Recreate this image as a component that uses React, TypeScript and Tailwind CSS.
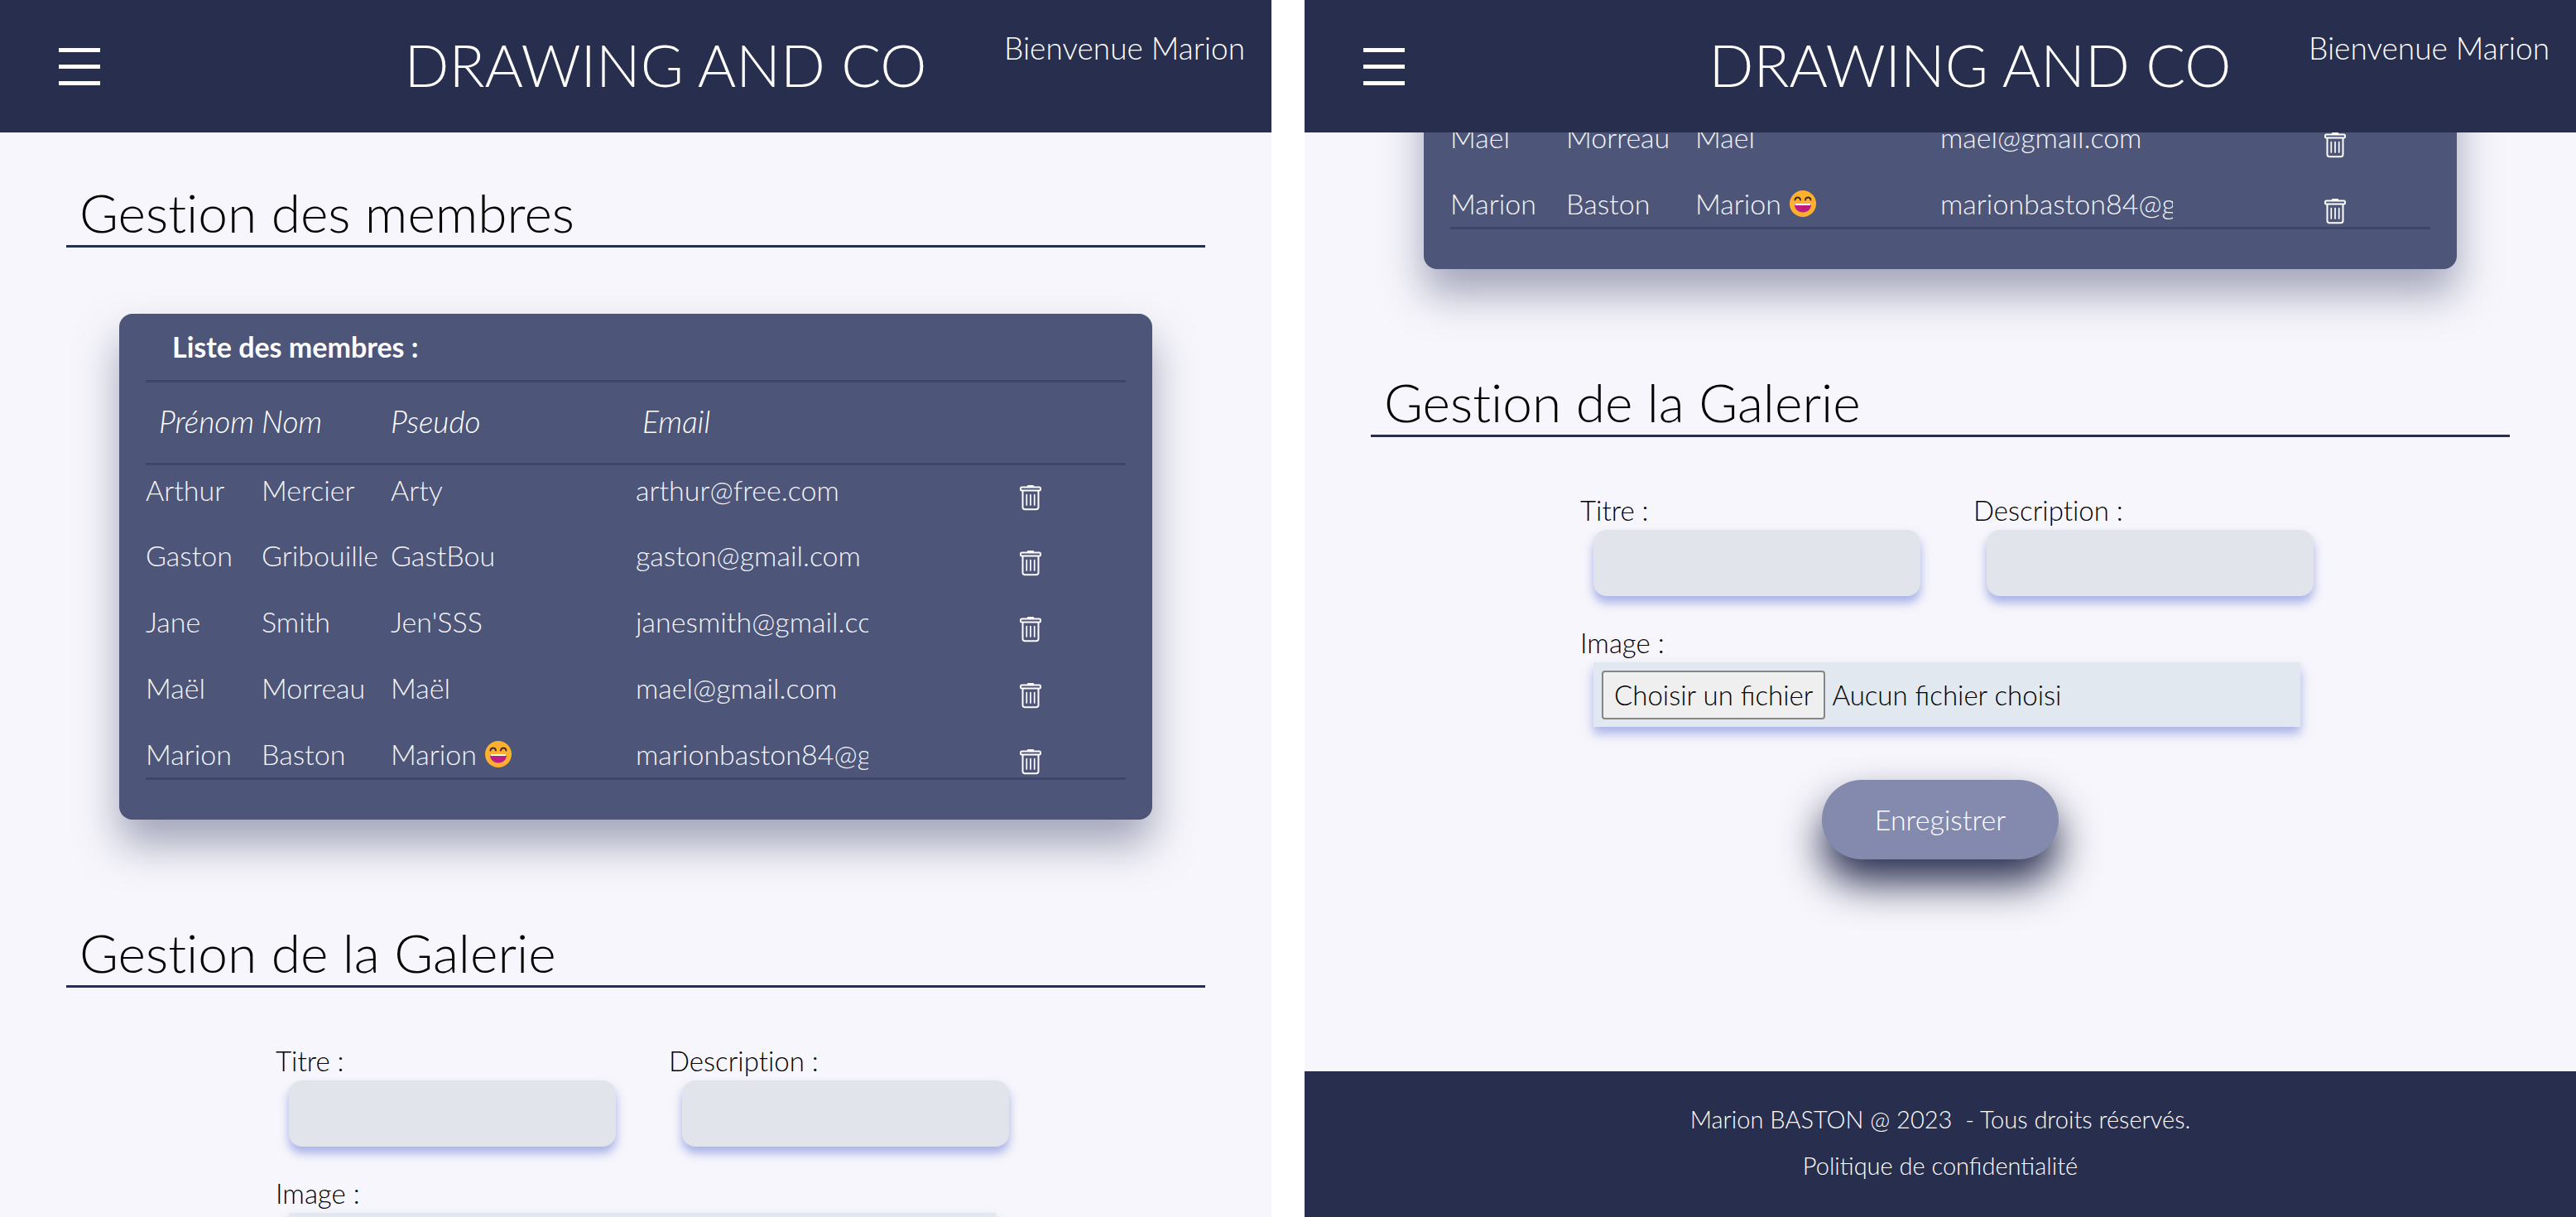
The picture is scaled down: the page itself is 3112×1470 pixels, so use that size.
import React, { useId } from "react";

type Member = {
  first: string;
  last: string;
  pseudo: string;
  email: string;
  emoji?: boolean;
};

const members: Member[] = [
  { first: "Arthur", last: "Mercier", pseudo: "Arty", email: "arthur@free.com" },
  { first: "Gaston", last: "Gribouille", pseudo: "GastBou", email: "gaston@gmail.com" },
  { first: "Jane", last: "Smith", pseudo: "Jen'SSS", email: "janesmith@gmail.com" },
  { first: "Maël", last: "Morreau", pseudo: "Maël", email: "mael@gmail.com" },
  { first: "Marion", last: "Baston", pseudo: "Marion", email: "marionbaston84@gmail.com", emoji: true },
];

function TrashIcon() {
  return (
    <svg width="28" height="32" viewBox="0 0 28 32" fill="none" stroke="white" strokeWidth="2" aria-hidden="true">
      <path d="M9.5 3.2C9.5 1.6 10.4 1 11.8 1h4.4c1.4 0 2.3.6 2.3 2.2z" fill="white" stroke="none" />
      <rect x="2" y="3.5" width="24" height="4" rx="1.5" />
      <path d="M4.5 8v19.5a2.8 2.8 0 0 0 2.8 2.8h13.4a2.8 2.8 0 0 0 2.8-2.8V8" />
      <path d="M9.3 12.5v12.5M14 12.5v12.5M18.7 12.5v12.5" strokeWidth="1.7" strokeLinecap="round" />
    </svg>
  );
}

function LaughIcon() {
  return (
    <svg width="32" height="32" viewBox="0 0 32 32" role="img" aria-label="sourire">
      <circle cx="16" cy="16" r="16" fill="#ffb02e" />
      <path d="M6.5 11.5c.5-4 6-4 6.5 0M19 11.5c.5-4 6-4 6.5 0" fill="none" stroke="#402a32" strokeWidth="2" strokeLinecap="round" />
      <path d="M6 17c0 5.5 4.2 9.5 10 9.5S26 22.5 26 17c0-.6-.4-1-1-1H7c-.6 0-1 .4-1 1z" fill="#bb1d80" />
      <path d="M6.5 16h19v1.2c0 .5-.4.8-.9.8H7.4c-.5 0-.9-.3-.9-.8z" fill="white" />
    </svg>
  );
}

function Header() {
  return (
    <header className="grid h-40 shrink-0 grid-cols-[440px_1fr_368px] items-center bg-[#282e4e] text-white">
      <button type="button" aria-label="Menu" className="ml-[71px] flex w-[50px] flex-col gap-[15px]">
        <span className="h-[5px] bg-white" />
        <span className="h-[5px] bg-white" />
        <span className="h-[5px] bg-white" />
      </button>
      <h1 className="pb-1 text-center text-[71px] leading-[80px] whitespace-nowrap">DRAWING AND CO</h1>
      <p className="self-start pt-[34px] pr-8 text-right text-[37px] leading-[48px] whitespace-nowrap">Bienvenue Marion</p>
    </header>
  );
}

function SectionTitle({ children }: { children: React.ReactNode }) {
  return (
    <h2 className="mx-20 border-b-[3px] border-[#282e4e] px-4 pb-[6px] text-[64px] leading-[66px] text-black [font-variant-ligatures:none]">
      {children}
    </h2>
  );
}

function MembersCard() {
  return (
    <div className="mx-36 mt-20 rounded-2xl bg-[#4d5578] px-8 pb-12 text-[34px] leading-[40px] text-[#f4f4f8] shadow-[0_30px_50px_0_rgba(77,85,120,0.5)]">
      <table className="w-full table-fixed border-collapse text-left">
        <caption className="h-20 px-8 pt-5 text-left font-bold text-white">Liste des membres :</caption>
        <colgroup>
          <col className="w-[140px]" />
          <col className="w-[156px]" />
          <col className="w-[25%]" />
          <col className="w-[281px]" />
          <col />
        </colgroup>
        <thead>
          <tr className="h-[100px] border-y-[3px] border-[#3f466b] text-[37px] text-white italic">
            <th scope="col" className="pb-1 pl-4 font-light">Prénom</th>
            <th scope="col" className="pb-1 font-light">Nom</th>
            <th scope="col" className="pb-1 font-light">Pseudo</th>
            <th scope="col" className="pb-1 pl-2 font-light">Email</th>
            <th scope="col"><span className="sr-only">Supprimer</span></th>
          </tr>
        </thead>
        <tbody className="border-b-[3px] border-[#3f466b]">
          {members.map((m, i) => (
            <tr key={m.email} className={i === members.length - 1 ? "h-[60px] align-top" : "h-20 align-top"}>
              <td className="pt-[10px]">{m.first}</td>
              <td className="pt-[10px]">{m.last}</td>
              <td className="pt-[10px]">
                <span className="flex items-center gap-[10px]">
                  {m.pseudo}
                  {m.emoji && <LaughIcon />}
                </span>
              </td>
              <td className="overflow-hidden pt-[10px] whitespace-nowrap">{m.email}</td>
              <td className="pt-[23px] pl-[182px]">
                <button type="button" aria-label={`Supprimer ${m.first} ${m.last}`} className="block">
                  <TrashIcon />
                </button>
              </td>
            </tr>
          ))}
        </tbody>
      </table>
    </div>
  );
}

const fieldShadow = "shadow-[0_8px_12px_0_rgba(90,110,210,0.5)]";

function GalleryForm() {
  const id = useId();
  return (
    <form className="mx-auto mt-[68px] w-full max-w-[870px] text-[33px] leading-[40px] text-black">
      <div className="grid grid-cols-2 gap-x-20 [font-variant-ligatures:none]">
        {["Titre :", "Description :"].map((label, i) => (
          <div key={label}>
            <label htmlFor={`${id}-${i}`} className="block">{label}</label>
            <input
              id={`${id}-${i}`}
              type="text"
              className={`mt-1 ml-4 block h-20 w-full rounded-2xl bg-[#e1e4ea] px-4 ${fieldShadow}`}
            />
          </div>
        ))}
      </div>
      <label htmlFor={`${id}-file`} className="mt-9 block">Image :</label>
      <label
        htmlFor={`${id}-file`}
        className={`mt-1 ml-4 flex h-[78px] items-center gap-2 bg-[#e1e8ef] px-[10px] whitespace-nowrap ${fieldShadow}`}
      >
        <input id={`${id}-file`} type="file" className="sr-only" />
        <span className="rounded-[4px] border-2 border-[#858585] bg-[#efefef] px-[13px] pt-[7px] pb-[8px]">Choisir un fichier</span>
        <span>Aucun fichier choisi</span>
      </label>
      <button
        type="button"
        className="mx-auto mt-16 block h-24 rounded-full bg-[#838aae] px-16 text-[34px] text-white shadow-[0_28px_50px_0_#282e4e]"
      >
        Enregistrer
      </button>
    </form>
  );
}

function Content() {
  return (
    <main className="shrink-0 pt-16 pb-64">
      <SectionTitle>Gestion des membres</SectionTitle>
      <MembersCard />
      <div className="mt-32">
        <SectionTitle>Gestion de la Galerie</SectionTitle>
        <GalleryForm />
      </div>
    </main>
  );
}

function Footer() {
  return (
    <footer className="shrink-0 bg-[#282e4e] pt-[30px] pb-[34px] text-center text-[29px] leading-[56px] text-white">
      <p>Marion BASTON @ 2023&nbsp; - Tous droits réservés.</p>
      <p>
        <a href="#confidentialite">Politique de confidentialité</a>
      </p>
    </footer>
  );
}

function Screen({ atEnd }: { atEnd?: boolean }) {
  return (
    <div className="flex h-screen min-w-0 flex-1 flex-col overflow-hidden bg-[#f7f6fc]">
      <Header />
      <div
        className={
          atEnd
            ? "flex min-h-0 flex-1 flex-col justify-end overflow-hidden"
            : "flex min-h-0 flex-1 flex-col justify-start overflow-hidden"
        }
      >
        <Content />
        <Footer />
      </div>
    </div>
  );
}

export default function App() {
  return (
    <div className="flex gap-10 bg-white font-['Lato',sans-serif] font-light">
      <Screen />
      <Screen atEnd />
    </div>
  );
}
